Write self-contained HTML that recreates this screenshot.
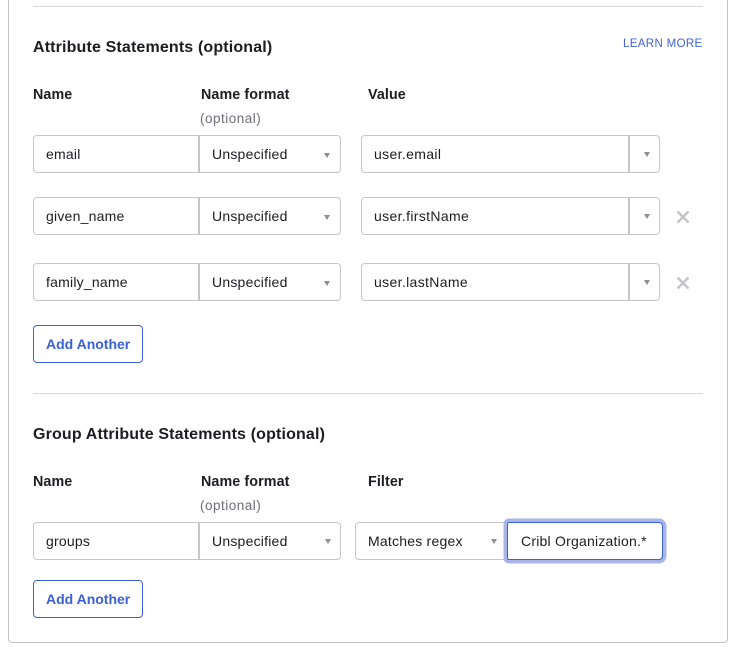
<!DOCTYPE html>
<html><head><meta charset="utf-8"><style>
html,body{margin:0;padding:0;background:#fff}
body{width:735px;height:647px;position:relative;overflow:hidden;font-family:"Liberation Sans",sans-serif;color:#1d1d21}
div,a{position:absolute;box-sizing:border-box}
.card{left:8px;top:-10px;width:720px;height:653px;border:1px solid #c4c4c8;border-radius:4px}
.hr{left:33px;width:670px;height:1px;background:#d7d7dc}
.h{left:33px;font-size:16px;font-weight:bold;line-height:20px;white-space:nowrap;letter-spacing:.15px}
.l{font-size:14.3px;font-weight:bold;line-height:18px;white-space:nowrap;letter-spacing:.1px}
.o{font-size:13.5px;line-height:16px;color:#6e6e78;white-space:nowrap;letter-spacing:.5px}
.box{height:38px;border:1px solid #c6c6ca;background:#fff;font-size:14px;line-height:36px;white-space:nowrap;letter-spacing:.22px;color:#1d1d21}
.n{left:33px;width:166px;border-radius:4px 0 0 4px;padding-left:12px;border-right:0}
.s{left:198px;width:143px;border-left:2px solid #c6c6ca;border-radius:0 4px 4px 0;padding-left:12px}
.v{left:361px;width:299px;border-radius:4px;padding-left:12px;letter-spacing:.35px}
.d{top:0;bottom:0;left:266px;width:2px;background:#c6c6ca}
.t{width:0;height:0;border-left:3.5px solid transparent;border-right:3.5px solid transparent;border-top:5px solid #8e8e94}
.btn{left:33px;width:110px;height:38px;border:1px solid #3a60d8;border-radius:4px;color:#3a60d8;font-size:14px;font-weight:bold;line-height:36px;padding-left:12px;white-space:nowrap}
svg{position:absolute}
</style></head><body>
<div class="card"></div>
<div class="hr" style="top:6px"></div>
<div class="h" style="top:38px">Attribute Statements (optional)</div>
<a style="left:623px;top:36px;font-size:11.5px;line-height:16px;color:#3f63d6;white-space:nowrap;letter-spacing:.35px">LEARN MORE</a>
<div class="l" style="left:33px;top:86px">Name</div>
<div class="l" style="left:201px;top:86px">Name format</div>
<div class="l" style="left:368px;top:86px">Value</div>
<div class="o" style="left:200px;top:111px">(optional)</div>

<div class="box n" style="top:135px">email</div>
<div class="box s" style="top:135px">Unspecified<div class="t" style="left:124px;top:17px"></div></div>
<div class="box v" style="top:135px">user.email<div class="d"></div><div class="t" style="left:282px;top:16px"></div></div>

<div class="box n" style="top:197px">given_name</div>
<div class="box s" style="top:197px">Unspecified<div class="t" style="left:124px;top:17px"></div></div>
<div class="box v" style="top:197px">user.firstName<div class="d"></div><div class="t" style="left:282px;top:16px"></div></div>
<svg style="left:676px;top:210px" width="14" height="14" viewBox="0 0 14 14"><path d="M1.5 1.5L12.5 12.5M12.5 1.5L1.5 12.5" stroke="#c4c4c8" stroke-width="2.4" fill="none"/></svg>

<div class="box n" style="top:263px">family_name</div>
<div class="box s" style="top:263px">Unspecified<div class="t" style="left:124px;top:17px"></div></div>
<div class="box v" style="top:263px">user.lastName<div class="d"></div><div class="t" style="left:282px;top:16px"></div></div>
<svg style="left:676px;top:276px" width="14" height="14" viewBox="0 0 14 14"><path d="M1.5 1.5L12.5 12.5M12.5 1.5L1.5 12.5" stroke="#c4c4c8" stroke-width="2.4" fill="none"/></svg>

<div class="btn" style="top:325px">Add Another</div>

<div class="hr" style="top:393px"></div>
<div class="h" style="top:425px">Group Attribute Statements (optional)</div>
<div class="l" style="left:33px;top:473px">Name</div>
<div class="l" style="left:201px;top:473px">Name format</div>
<div class="l" style="left:368px;top:473px">Filter</div>
<div class="o" style="left:200px;top:498px">(optional)</div>

<div class="box n" style="top:522px">groups</div>
<div class="box s" style="top:522px">Unspecified<div class="t" style="left:125px;top:16px"></div></div>
<div class="box" style="left:355px;top:522px;width:152px;border-radius:4px 0 0 4px;padding-left:12px">Matches regex<div class="t" style="left:135px;top:16px"></div></div>
<div class="box" style="left:507px;top:522px;width:156px;border:1px solid #3a60d8;border-radius:2px 4px 4px 2px;padding-left:13px;box-shadow:0 0 0 3.5px #aab6ea">Cribl Organization.*</div>

<div class="btn" style="top:580px">Add Another</div>
</body></html>
